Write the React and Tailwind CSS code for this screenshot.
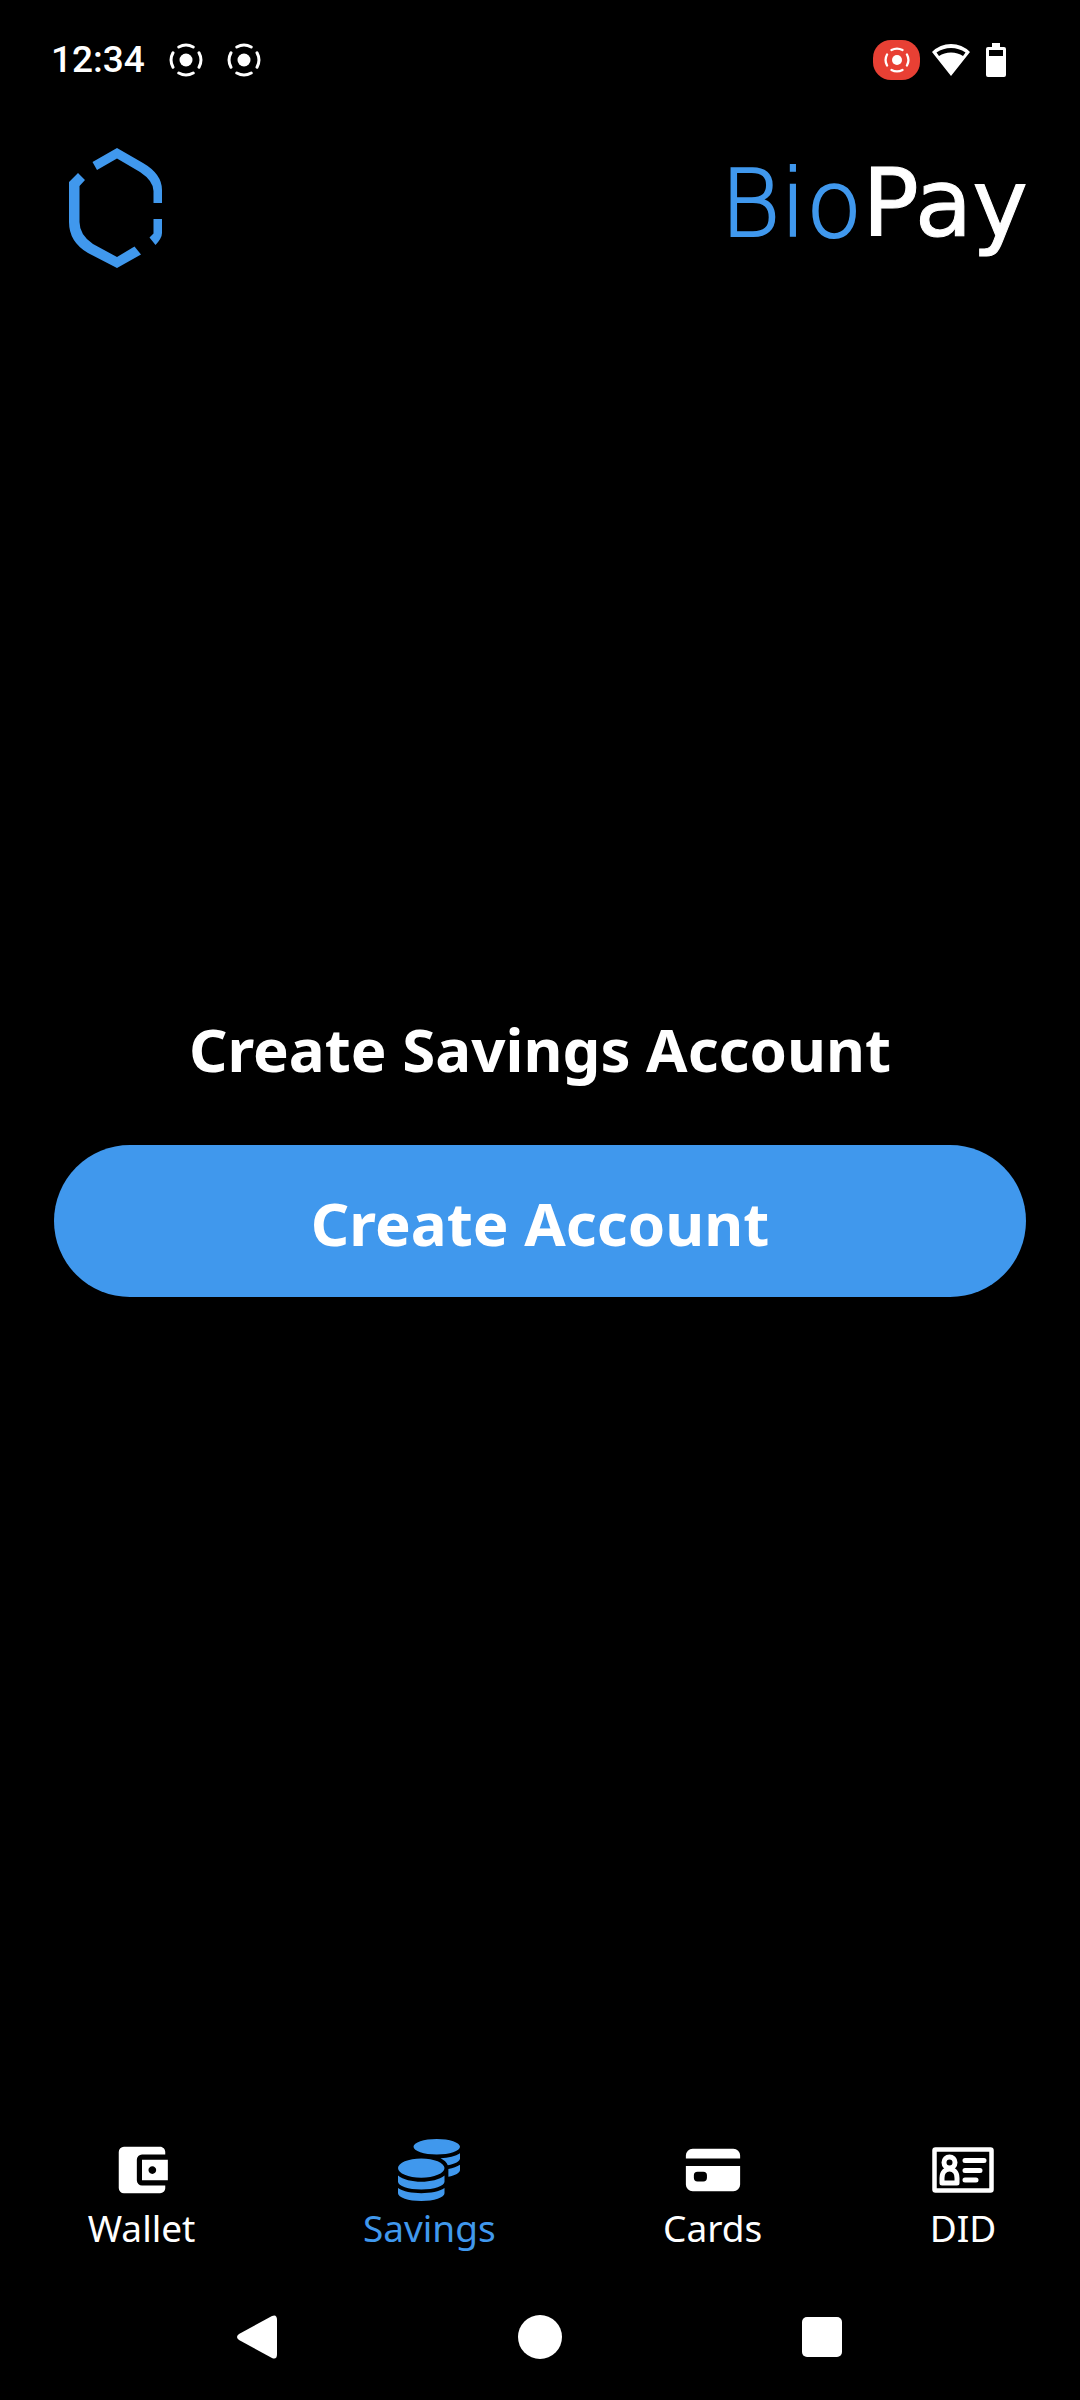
import { FaCoins } from "react-icons/fa";
import { IoCard } from "react-icons/io5";
import { MdAccountBalanceWallet } from "react-icons/md";

function RecordIcon({ className }) {
  return (
    <svg viewBox="0 0 34 34" className={className} fill="none" stroke="currentColor" strokeWidth="3" strokeLinecap="round" aria-hidden="true">
      <circle cx="17" cy="17" r="6.5" fill="currentColor" stroke="none" />
      <path d="M9.8 4 A15 15 0 0 1 24.2 4" />
      <path d="M9.8 30 A15 15 0 0 0 24.2 30" />
      <path d="M4 9.8 A15 15 0 0 0 4 24.2" />
      <path d="M30 9.8 A15 15 0 0 1 30 24.2" />
    </svg>
  );
}

function WifiIcon() {
  return (
    <svg viewBox="0 0 40 34" className="h-[34px] w-10" aria-hidden="true">
      <path fill="currentColor" fillRule="evenodd" d="M20 33 L1 9 Q9 1 20 1 T39 9 Z M5.5 9.5 L8 13 Q13 9.5 20 9.5 T32 13 L34.5 9.5 Q28 5 20 5 T5.5 9.5 Z" />
    </svg>
  );
}

function BatteryIcon() {
  return (
    <svg viewBox="0 0 20 34" className="h-[34px] w-5" aria-hidden="true">
      <path fill="currentColor" fillRule="evenodd" d="M6 0 H14 V4 H18 Q20 4 20 6 V32 Q20 34 18 34 H2 Q0 34 0 32 V6 Q0 4 2 4 H6 Z M3 7 V13 H17 V7 Z" />
    </svg>
  );
}

function StatusBar() {
  return (
    <div className="flex h-20 items-center justify-between pt-[40px] pr-[74px] pl-[51px]">
      <div className="flex items-center">
        <span className="mr-6 font-['Roboto',sans-serif] text-[37px] leading-10 font-medium">12:34</span>
        <RecordIcon className="mr-6 size-[34px]" />
        <RecordIcon className="size-[34px]" />
      </div>
      <div className="flex items-center">
        <span className="mr-[11px] flex h-10 w-[47px] items-center justify-center rounded-[18px] bg-[#e84034]">
          <RecordIcon className="size-[26px]" />
        </span>
        <WifiIcon />
        <span className="ml-[15px] flex">
          <BatteryIcon />
        </span>
      </div>
    </div>
  );
}

function HexLogo() {
  return (
    <svg viewBox="0 0 93 120" className="h-[120px] w-[93px]" fill="#4098ed" aria-label="BioPay logo" role="img">
      <path d="M23.500 14 L48 0 L74 15 Q93 26 93 42 V55 H84.500 V43 Q84.500 33 71 24 L48 10.500 L28 22 Z" />
      <path d="M9 25 L16 32 L10.500 38 V74 Q10.500 87 24 96 L48 109 L65.500 98.500 L72 106.500 L48 120 L19 105 Q0 94 0 74 V34 Z" />
      <path d="M84.500 71 H93 V85 Q93 90 86.500 97 L80.500 89.500 L84.500 85.500 Z" />
    </svg>
  );
}

function IdCardIcon() {
  return (
    <svg viewBox="0 0 62 46" className="h-[46px] w-[62px]" fill="none" stroke="currentColor" strokeWidth="5" strokeLinejoin="round" strokeLinecap="round" aria-hidden="true">
      <rect x="2.500" y="2.500" width="57" height="41" strokeWidth="4.500" rx="1" />
      <circle cx="17.500" cy="15.500" r="5.500" />
      <path d="M10 36 V31 C10 19 25 19 25 31 V36 Z" />
      <path d="M33 13.500 H52 M33 23.500 H48 M33 33 H44" />
    </svg>
  );
}

const tabs = [
  { label: "Wallet", icon: <MdAccountBalanceWallet className="size-[62px]" /> },
  { label: "Savings", icon: <FaCoins className="size-[62px]" />, active: true },
  { label: "Cards", icon: <IoCard className="size-[62px]" /> },
  { label: "DID", icon: <IdCardIcon /> },
];

function TabBar() {
  return (
    <nav className="flex justify-around pl-1">
      {tabs.map((tab) => (
        <a
          key={tab.label}
          href={"#" + tab.label.toLowerCase()}
          aria-current={tab.active ? "page" : undefined}
          className={tab.active ? "flex flex-col items-center text-[#4098ed]" : "flex flex-col items-center text-white"}
        >
          <span className="flex h-[62px] items-center">{tab.icon}</span>
          <span className="text-[37px] leading-[54px]">{tab.label}</span>
        </a>
      ))}
    </nav>
  );
}

function SystemNav() {
  return (
    <div className="flex justify-center gap-[238px] pt-[60px] pb-[41px]">
      <button type="button" aria-label="Back">
        <svg viewBox="0 0 44 44" className="size-11" fill="currentColor">
          <path d="M36 1 Q41 -1 41 5 V39 Q41 45 36 43 L3 25 Q-1 22 3 19 Z" />
        </svg>
      </button>
      <button type="button" aria-label="Home" className="size-11 rounded-full bg-white" />
      <button type="button" aria-label="Recent apps" className="flex size-11 items-center justify-center">
        <span className="size-10 rounded-[5px] bg-white" />
      </button>
    </div>
  );
}

export default function App() {
  return (
    <div className="flex min-h-screen flex-col bg-black font-['Noto_Sans',sans-serif] text-white">
      <StatusBar />
      <header className="flex items-start justify-between pt-[68px] pr-[52px] pl-[69px]">
        <HexLogo />
        <h1 className="font-['DejaVu_Sans',sans-serif] text-[94px] leading-[112px]">
          <span className="text-[92px] font-extralight text-[#4098ed] [-webkit-text-stroke:2px_#4098ed]">Bio</span>
          <span className="[-webkit-text-stroke:1px_white]">Pay</span>
        </h1>
      </header>
      <main className="flex grow flex-col justify-center px-[54px] pb-[102px] text-center text-[60px] leading-[80px] font-bold">
        <h2 className="mb-[56px]">Create Savings Account</h2>
        <button type="button" className="h-[152px] rounded-full bg-[#4098ed] pt-1">
          Create Account
        </button>
      </main>
      <TabBar />
      <SystemNav />
    </div>
  );
}
